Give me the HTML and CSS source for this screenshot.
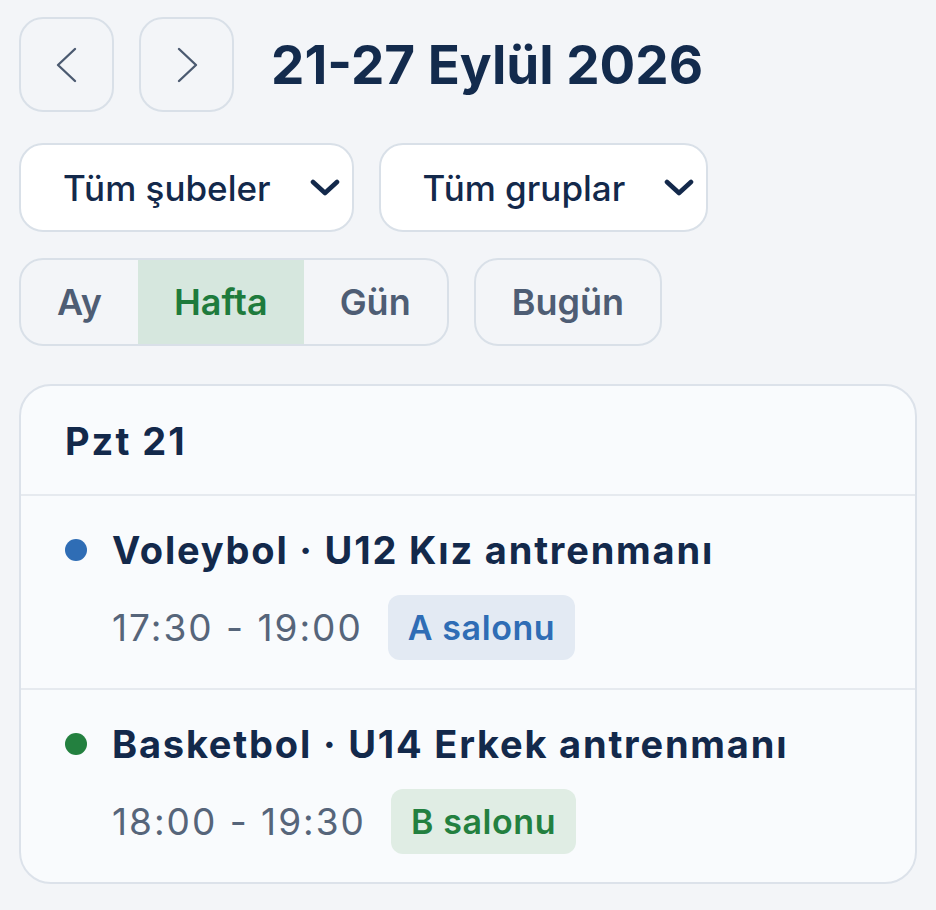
FILE: index.html
```html
<!DOCTYPE html>
<html lang="tr">
<head>
<meta charset="utf-8">
<title>Takvim</title>
<link rel="stylesheet" href="styles.css">
</head>
<body>
<div class="page">
  <header class="toolbar">
    <div class="navs">
      <button class="nav-btn" aria-label="Önceki">
        <svg width="22" height="36" viewBox="0 0 22 36"><path d="M19 2 L2 18 L19 34" fill="none" stroke="#4b5a70" stroke-width="2.4" stroke-linecap="round" stroke-linejoin="round"/></svg>
      </button>
      <button class="nav-btn" aria-label="Sonraki">
        <svg width="22" height="36" viewBox="0 0 22 36"><path d="M3 2 L20 18 L3 34" fill="none" stroke="#4b5a70" stroke-width="2.4" stroke-linecap="round" stroke-linejoin="round"/></svg>
      </button>
    </div>
    <h1 class="title">21-27 Eylül 2026</h1>
  </header>

  <div class="filters">
    <div class="select">
      <span class="select-label">Tüm şubeler</span>
      <svg class="chev" width="30" height="18" viewBox="0 0 30 18"><path d="M3 3 L15 14 L27 3" fill="none" stroke="#13294b" stroke-width="4.6" stroke-linecap="round" stroke-linejoin="round"/></svg>
    </div>
    <div class="select">
      <span class="select-label">Tüm gruplar</span>
      <svg class="chev" width="30" height="18" viewBox="0 0 30 18"><path d="M3 3 L15 14 L27 3" fill="none" stroke="#13294b" stroke-width="4.6" stroke-linecap="round" stroke-linejoin="round"/></svg>
    </div>
  </div>

  <div class="views">
    <div class="segmented">
      <span class="seg">Ay</span>
      <span class="seg seg-active">Hafta</span>
      <span class="seg">Gün</span>
    </div>
    <span class="today">Bugün</span>
  </div>

  <section class="card">
    <div class="card-head">Pzt 21</div>
    <div class="event">
      <div class="event-title"><span class="dot dot-blue"></span>Voleybol · U12 Kız antrenmanı</div>
      <div class="event-meta">
        <span class="time">17:30 - 19:00</span>
        <span class="badge badge-blue">A salonu</span>
      </div>
    </div>
    <div class="event">
      <div class="event-title"><span class="dot dot-green"></span>Basketbol · U14 Erkek antrenmanı</div>
      <div class="event-meta">
        <span class="time">18:00 - 19:30</span>
        <span class="badge badge-green">B salonu</span>
      </div>
    </div>
  </section>
</div>
</body>
</html>
```

FILE: styles.css
```css
* { box-sizing: border-box; }

html, body {
  margin: 0;
  background: #f3f5f8;
}

body {
  font-family: Inter, "Noto Sans", sans-serif;
  color: #13294b;
}

.page {
  padding: 17px 19px;
  width: 936px;
}

.toolbar {
  display: flex;
  align-items: center;
}

.navs {
  display: flex;
  gap: 25px;
}

.nav-btn {
  width: 95px;
  height: 95px;
  border: 2px solid #d9e0e8;
  border-radius: 24px;
  background: transparent;
  display: flex;
  align-items: center;
  justify-content: center;
  padding: 0;
}

.title {
  margin: 0 0 0 37px;
  font-size: 53px;
  font-weight: 700;
  letter-spacing: 0;
  color: #132b4d;
}

.filters {
  display: flex;
  gap: 25px;
  margin-top: 31px;
}

.select {
  height: 89px;
  display: flex;
  align-items: center;
  gap: 39px;
  padding: 0 12px 0 42px;
  background: #ffffff;
  border: 2px solid #d9e0e8;
  border-radius: 24px;
}

.select-label {
  font-size: 35px;
  font-weight: 500;
  color: #13294b;
}

.chev { display: block; }

.views {
  display: flex;
  gap: 25px;
  margin-top: 26px;
}

.segmented {
  display: flex;
  height: 88px;
  border: 2px solid #d9e0e8;
  border-radius: 24px;
  overflow: hidden;
}

.seg, .today {
  display: flex;
  align-items: center;
  padding: 0 36px;
  font-size: 36px;
  font-weight: 600;
  color: #4e5d74;
}

.seg-active {
  background: #d6e7de;
  color: #1e7b3c;
}

.today {
  height: 88px;
  border: 2px solid #d9e0e8;
  border-radius: 24px;
}

.card {
  margin-top: 38px;
  width: 898px;
  background: #f9fbfd;
  border: 2px solid #dce2ea;
  border-radius: 32px;
  overflow: hidden;
}

.card-head {
  padding: 33px 44px 31px;
  font-size: 38px;
  font-weight: 700;
  letter-spacing: 2px;
  line-height: 44px;
  border-bottom: 2px solid #e6eaef;
}

.event {
  padding: 32px 44px 28px;
}

.event + .event {
  border-top: 2px solid #e6eaef;
}

.event-title {
  display: flex;
  align-items: center;
  font-size: 38px;
  font-weight: 700;
  letter-spacing: 1.8px;
  line-height: 44px;
  color: #13294b;
}

.dot {
  width: 22px;
  height: 22px;
  border-radius: 50%;
  margin-right: 25px;
  flex: none;
}

.dot-blue { background: #2f6db5; }
.dot-green { background: #23803f; }

.event-meta {
  display: flex;
  align-items: center;
  gap: 25px;
  margin-top: 23px;
  padding-left: 47px;
}

.time {
  font-size: 37px;
  font-weight: 400;
  letter-spacing: 2px;
  color: #56657a;
}

.badge {
  height: 65px;
  display: flex;
  align-items: center;
  padding: 0 20px;
  border-radius: 12px;
  font-size: 34px;
  font-weight: 600;
  letter-spacing: 0.6px;
}

.badge-blue { background: #e3eaf3; color: #2f6db5; }
.badge-green { background: #e0ede4; color: #23803f; }
```
